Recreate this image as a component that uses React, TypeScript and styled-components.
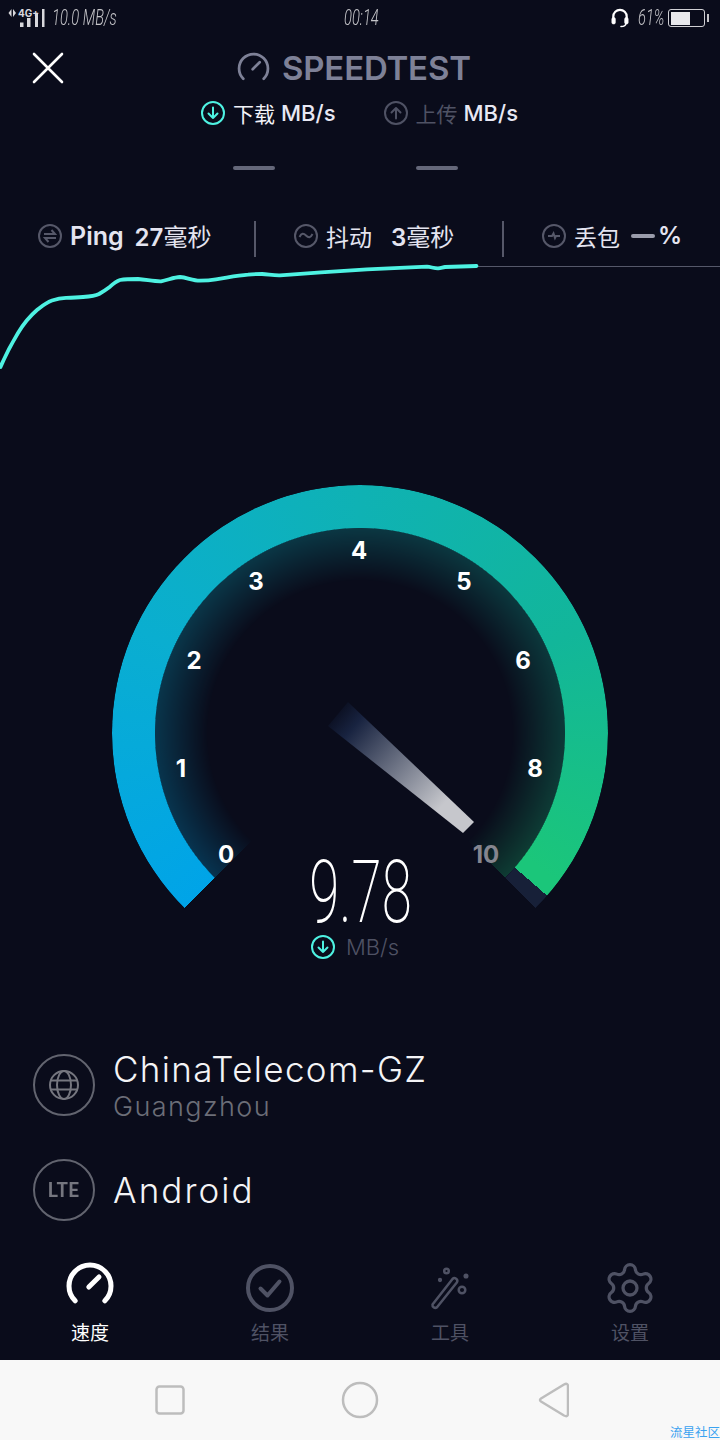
import React from 'react';
import styled, { createGlobalStyle } from 'styled-components';
import { Settings } from 'lucide-react';

const GlobalStyle = createGlobalStyle`
    html, body {
        margin: 0;
        padding: 0;
        background: #0a0c1b;
    }
    * {
        box-sizing: border-box;
    }
`;

const sans = `Inter, "Noto Sans CJK SC", sans-serif`;

const Page = styled.div`
    width: 720px;
    height: 1440px;
    display: flex;
    flex-direction: column;
    background: #0a0c1b;
    color: #fff;
    font-family: ${sans};
    overflow: hidden;
    position: relative;
`;

const StatusBar = styled.div`
    height: 36px;
    display: grid;
    grid-template-columns: 1fr auto 1fr;
    align-items: center;
`;

const StatusLeft = styled.div`
    display: flex;
    align-items: center;
    padding-left: 8px;
`;

const SignalIcon = styled.svg`
    margin-right: 6px;
    flex: none;
`;

const StatusRight = styled.div`
    display: flex;
    align-items: center;
    justify-content: flex-end;
    padding-right: 11px;
`;

const StatusText = styled.span<{ $width: number; $before?: number }>`
    display: inline-block;
    width: ${p => p.$width}px;
    margin-left: ${p => p.$before ?? 0}px;
    font-family: Roboto, sans-serif;
    font-weight: 300;
    font-style: italic;
    font-size: 22px;
    line-height: 24px;
    color: #c4c4c8;
    white-space: nowrap;
    transform: scaleX(0.67);
    transform-origin: left center;
`;

const BatteryBody = styled.div`
    width: 37px;
    height: 18px;
    border: 1.5px solid #d0d0d4;
    border-radius: 3px;
    padding: 1.5px;
    margin-left: 6px;
`;

const BatteryFill = styled.div`
    width: 61%;
    height: 100%;
    background: #e8e8ec;
`;

const BatteryNub = styled.div`
    width: 2px;
    height: 8px;
    margin-left: 2px;
    background: #c4c4c8;
`;

const TitleRow = styled.div`
    display: grid;
    grid-template-columns: 237px 1fr;
    align-items: center;
    height: 62px;
    margin-top: 1px;
`;

const CloseButton = styled.svg`
    margin-left: 32px;
`;

const Title = styled.div`
    display: flex;
    align-items: center;
    gap: 12px;
    font-size: 33px;
    font-weight: 600;
    letter-spacing: -0.2px;
    color: #7e8197;
`;

const TabsRow = styled.div`
    display: flex;
    gap: 48px;
    padding-left: 201px;
    height: 32px;
    margin-top: -2px;
`;

const Tab = styled.div`
    display: flex;
    align-items: center;
    gap: 8px;
`;

const TabLabel = styled.span<{ $dim?: boolean }>`
    font-size: 21px;
    font-weight: 400;
    color: ${p => (p.$dim ? '#4f5264' : '#f2f2f8')};
`;

const TabUnit = styled.span`
    font-size: 22px;
    font-weight: 500;
    color: #e8e8f4;
    margin-left: -2px;
`;

const DashRow = styled.div`
    display: flex;
    gap: 141px;
    padding-left: 233px;
    margin-top: 37px;
`;

const Dash = styled.div`
    width: 42px;
    height: 4px;
    border-radius: 2px;
    background: #65687a;
`;

const MetricsRow = styled.div`
    display: flex;
    align-items: center;
    height: 49px;
    margin-top: 41px;
    padding-left: 38px;
`;

const Metric = styled.div<{ $width: number }>`
    display: flex;
    align-items: center;
    width: ${p => p.$width}px;
    font-size: 23px;
    color: #e4e4f0;
`;

const MetricIcon = styled.svg`
    margin-right: 8px;
    flex: none;
`;

const MetricValue = styled.span<{ $gap: number }>`
    margin-left: ${p => p.$gap}px;
    white-space: nowrap;
    font-size: 24px;
`;

const MetricDigits = styled.span`
    font-weight: 600;
    font-size: 24px;
`;

const MetricName = styled.span<{ $bold?: boolean }>`
    font-weight: ${p => (p.$bold ? 600 : 400)};
    font-size: ${p => (p.$bold ? 25 : 23)}px;
    white-space: nowrap;
`;

const MetricDash = styled.span`
    display: inline-block;
    width: 24px;
    height: 4px;
    border-radius: 2px;
    background: #9a9cab;
    margin: 0 3px 0 11px;
`;

const Divider = styled.div<{ $after: number }>`
    width: 2px;
    height: 36px;
    background: #565869;
    margin: 7px ${p => p.$after}px 0 0;
    flex: none;
`;

const Chart = styled.svg`
    display: block;
    flex: none;
`;

const Gauge = styled.div`
    position: relative;
    width: 496px;
    height: 496px;
    margin: 115px 0 0 112px;
    flex: none;
`;

const arc = `conic-gradient(from -135deg, #00a4e8 0deg, #0aaed0 70deg, #0fb2b4 135deg, #12b69a 200deg, #1bc67a 262deg`;

const Band = styled.div`
    position: absolute;
    inset: 0;
    border-radius: 50%;
    background: ${arc}, #1bc67a 266deg, #172038 266deg, #172038 270deg, transparent 270deg);
    mask-image: radial-gradient(circle at center, transparent 204.5px, #000 205.5px);
`;

const Glow = styled.div`
    position: absolute;
    inset: 0;
    border-radius: 50%;
    opacity: 0.26;
    background: ${arc}, #1bc67a 270deg, transparent 270deg);
    mask-image: radial-gradient(circle at center, transparent 152px, #000 205px, transparent 205px);
`;

const Tick = styled.span<{ $x: number; $y: number; $dim?: boolean }>`
    position: absolute;
    left: ${p => p.$x}px;
    top: ${p => p.$y}px;
    transform: translate(-50%, -50%);
    font-size: 24px;
    font-weight: 700;
    line-height: 1;
    color: ${p => (p.$dim ? '#85858f' : '#fff')};
`;

const Needle = styled.svg`
    position: absolute;
    left: 0;
    top: 0;
`;

const Reading = styled.div`
    position: absolute;
    left: 0;
    right: 0;
    top: 370px;
    display: flex;
    flex-direction: column;
    align-items: center;
`;

const ReadingValue = styled.div`
    font-family: Roboto, sans-serif;
    font-weight: 200;
    font-size: 88px;
    line-height: 74px;
    color: #fff;
    transform: scaleX(0.62);
`;

const ReadingUnit = styled.div`
    display: flex;
    align-items: center;
    gap: 11px;
    margin: 5px 10px 0 0;
    font-size: 22px;
    line-height: 26px;
    font-weight: 300;
    color: #4f5264;
`;

const ServerList = styled.div`
    display: flex;
    flex-direction: column;
    gap: 43px;
    margin-top: 73px;
    padding-left: 33px;
`;

const ServerRow = styled.div`
    display: flex;
    align-items: center;
    gap: 18px;
    height: 62px;
`;

const RoundBadge = styled.div`
    width: 62px;
    height: 62px;
    border: 2px solid #62646f;
    border-radius: 50%;
    display: flex;
    align-items: center;
    justify-content: center;
    flex: none;
`;

const BadgeText = styled.span`
    font-family: Roboto, sans-serif;
    font-size: 21px;
    font-weight: 700;
    letter-spacing: 0.5px;
    color: #75767f;
    transform: scaleX(0.88);
`;

const ServerText = styled.div`
    display: flex;
    flex-direction: column;
`;

const ServerName = styled.div<{ $spacing: number }>`
    font-size: 35px;
    font-weight: 300;
    letter-spacing: ${p => p.$spacing}px;
    line-height: 40px;
    color: #f4f4f6;
    white-space: nowrap;
`;

const ServerPlace = styled.div`
    font-size: 27px;
    font-weight: 300;
    letter-spacing: 1.4px;
    line-height: 32px;
    margin: 2px 0 -2px;
    color: #6c6e78;
`;

const TabBar = styled.div`
    display: grid;
    grid-template-columns: repeat(4, 180px);
    height: 100px;
    margin-top: auto;
`;

const TabBarItem = styled.div<{ $active?: boolean }>`
    display: flex;
    flex-direction: column;
    align-items: center;
    font-size: 19px;
    color: ${p => (p.$active ? '#fff' : '#4f5264')};
`;

const TabBarIcon = styled.div<{ $lift?: number }>`
    height: 56px;
    display: flex;
    align-items: center;
    justify-content: center;
    padding-bottom: ${p => p.$lift ?? 0}px;
`;

const TabBarLabel = styled.span`
    line-height: 26px;
    margin-top: 5px;
`;

const SystemBar = styled.div`
    height: 80px;
    background: #f8f8f8;
    display: grid;
    grid-template-columns: repeat(3, 60px);
    justify-content: center;
    column-gap: 130px;
    align-items: center;
    justify-items: center;
    flex: none;
`;

const BackIcon = styled.svg`
    margin-left: 6px;
`;

const Watermark = styled.span`
    position: absolute;
    right: 0;
    bottom: 0;
    font-size: 12.5px;
    line-height: 14px;
    color: #3aa2f0;
`;

const ArrowCircle: React.FC<{ up?: boolean; color: string }> = ({ up, color }) => (
    <svg width="24" height="24" viewBox="0 0 24 24" fill="none" stroke={color} strokeWidth="2" strokeLinecap="round" strokeLinejoin="round">
        <circle cx="12" cy="12" r="11" />
        {up ? <path d="M12 17.500V7M7.500 11.500L12 7l4.500 4.500" /> : <path d="M12 6.500V17M7.500 12.500L12 17l4.500-4.500" />}
    </svg>
);

const GaugeGlyph: React.FC<{ size: number; color: string; weight: number }> = ({ size, color, weight }) => (
    <svg width={size} height={size} viewBox="0 0 48 48" fill="none" stroke={color} strokeWidth={weight} strokeLinecap="round">
        <path d="M9.150 38.850A21 21 0 1 1 38.850 38.850" />
        <path d="M22.800 25L33 15" />
    </svg>
);

const ticks = [
    { label: '0', x: 114, y: 370 },
    { label: '1', x: 69, y: 284 },
    { label: '2', x: 82, y: 176 },
    { label: '3', x: 144, y: 97 },
    { label: '4', x: 247, y: 66 },
    { label: '5', x: 352, y: 97 },
    { label: '6', x: 411, y: 176 },
    { label: '8', x: 423, y: 284 },
    { label: '10', x: 374, y: 370, dim: true },
];

const Speedtest: React.FC = () => {
    return (
        <Page>
            <GlobalStyle />
            <StatusBar>
                <StatusLeft>
                    <SignalIcon width="38" height="20" viewBox="0 0 38 20">
                        <path d="M0.500 5L3.500 1v8zM5 1l3 4-3 4z" fill="#d8d8dc" />
                        <text x="10" y="8.500" fontFamily="Inter" fontWeight="700" fontSize="10" fill="#d8d8dc">4G+</text>
                        <path d="M12 14.500h3.500V19H12zM19 10h3.500v9H19zM27 5h3v14h-3zM34 1h2.500v18H34z" fill="#d8d8dc" />
                    </SignalIcon>
                    <StatusText $width={70}>10.0 MB/s</StatusText>
                </StatusLeft>
                <StatusText $width={32}>00:14</StatusText>
                <StatusRight>
                    <svg width="18" height="20" viewBox="0 0 18 20" fill="none" stroke="#fff" strokeLinecap="round">
                        <path d="M2.300 11V8.500a6.700 6.700 0 0 1 13.400 0V11" strokeWidth="2.200" />
                        <rect x="0.800" y="9.500" width="3.600" height="6.500" rx="1.500" fill="#fff" strokeWidth="0.500" />
                        <rect x="13.600" y="9.500" width="3.600" height="6.500" rx="1.500" fill="#fff" strokeWidth="0.500" />
                        <path d="M15 15.500c-.3 2.500-2 3-5 3" strokeWidth="1.600" />
                    </svg>
                    <StatusText $width={24} $before={9}>61%</StatusText>
                    <BatteryBody><BatteryFill /></BatteryBody>
                    <BatteryNub />
                </StatusRight>
            </StatusBar>

            <TitleRow>
                <CloseButton width="32" height="32" viewBox="0 0 32 32" stroke="#fff" strokeWidth="2.600" strokeLinecap="round">
                    <path d="M2 2l28 28M30 2L2 30" />
                </CloseButton>
                <Title>
                    <GaugeGlyph size={33} color="#7e8197" weight={4} />
                    SPEEDTEST
                </Title>
            </TitleRow>

            <TabsRow>
                <Tab>
                    <ArrowCircle color="#4ef2e2" />
                    <TabLabel>下载</TabLabel>
                    <TabUnit>MB/s</TabUnit>
                </Tab>
                <Tab>
                    <ArrowCircle up color="#4f5264" />
                    <TabLabel $dim>上传</TabLabel>
                    <TabUnit>MB/s</TabUnit>
                </Tab>
            </TabsRow>

            <DashRow>
                <Dash />
                <Dash />
            </DashRow>

            <MetricsRow>
                <Metric $width={216}>
                    <MetricIcon width="24" height="24" viewBox="0 0 24 24" fill="none" stroke="#565869" strokeWidth="2">
                        <circle cx="12" cy="12" r="11" />
                        <path d="M6 10h11l-3.500-4M18 14H7l3.500 4" />
                    </MetricIcon>
                    <MetricName $bold>Ping</MetricName>
                    <MetricValue $gap={11}><MetricDigits>27</MetricDigits>毫秒</MetricValue>
                </Metric>
                <Divider $after={38} />
                <Metric $width={208}>
                    <MetricIcon width="24" height="24" viewBox="0 0 24 24" fill="none" stroke="#565869" strokeWidth="2">
                        <circle cx="12" cy="12" r="11" />
                        <path d="M5.500 13c2-4 4-4 6.500-1.500s4.500 2.500 6.500-1.500" />
                    </MetricIcon>
                    <MetricName>抖动</MetricName>
                    <MetricValue $gap={19}><MetricDigits>3</MetricDigits>毫秒</MetricValue>
                </Metric>
                <Divider $after={38} />
                <Metric $width={170}>
                    <MetricIcon width="24" height="24" viewBox="0 0 24 24" fill="none" stroke="#565869" strokeWidth="2">
                        <circle cx="12" cy="12" r="11" />
                        <path d="M6 12h4l1.500-2.500 1.500 4.500 1-2h4" />
                    </MetricIcon>
                    <MetricName>丢包</MetricName>
                    <MetricDash />
                    <MetricDigits>%</MetricDigits>
                </Metric>
            </MetricsRow>

            <Chart width="720" height="110" viewBox="0 260 720 110" fill="none">
                <path d="M476 266.500H720" stroke="#55586a" strokeWidth="1" />
                <path
                    d="M0.500 367C6 354 12 343 18 333C24 323 30 316 37 310C42 306 46 302.500 52 300.500C57 298.800 60 298 66 297.800C72 297.800 78 297.600 83 297C90 296.500 95 296 99 294C104 291 107 289 110 286.700C114 283 117 281 120 280C126 279 132 279 138 279C146 279.500 154 281.500 161 281.300C168 280 174 277.200 180 277C187 277.500 193 280.800 200 280.700C207 280.600 212 280 216 279.300C228 277.500 238 275.500 248 274.700C254 274 258 274 262 274C268 274.300 274 275.500 280 275.300L321 272.300L367 269.300L427 266.700C431 267 434 268.300 438 268.300C441 268 443 267.200 445 267L476.500 266"
                    stroke="#4ef2e2"
                    strokeWidth="3.800"
                    strokeLinecap="round"
                    strokeLinejoin="round"
                />
            </Chart>

            <Gauge>
                <Glow />
                <Band />
                {ticks.map(t => (
                    <Tick key={t.label} $x={t.x} $y={t.y} $dim={t.dim}>{t.label}</Tick>
                ))}
                <Needle width="496" height="496" viewBox="0 0 496 496">
                    <defs>
                        <linearGradient id="needleFade" gradientUnits="userSpaceOnUse" x1="226" y1="228" x2="357" y2="343">
                            <stop offset="0" stopColor="#0c1124" />
                            <stop offset="0.12" stopColor="#182340" />
                            <stop offset="0.8" stopColor="#c6c7cc" />
                            <stop offset="1" stopColor="#c6c7cc" />
                        </linearGradient>
                    </defs>
                    <polygon points="236,217 216,241 351,348 362,337" fill="url(#needleFade)" />
                </Needle>
                <Reading>
                    <ReadingValue>9.78</ReadingValue>
                    <ReadingUnit>
                        <ArrowCircle color="#4ef2e2" />
                        MB/s
                    </ReadingUnit>
                </Reading>
            </Gauge>

            <ServerList>
                <ServerRow>
                    <RoundBadge>
                        <svg width="32" height="32" viewBox="0 0 32 32" fill="none" stroke="#75767f" strokeWidth="2">
                            <circle cx="16" cy="16" r="14" />
                            <ellipse cx="16" cy="16" rx="7" ry="14" />
                            <path d="M3 11.500h26M3 20.500h26" />
                        </svg>
                    </RoundBadge>
                    <ServerText>
                        <ServerName $spacing={1.33}>ChinaTelecom-GZ</ServerName>
                        <ServerPlace>Guangzhou</ServerPlace>
                    </ServerText>
                </ServerRow>
                <ServerRow>
                    <RoundBadge>
                        <BadgeText>LTE</BadgeText>
                    </RoundBadge>
                    <ServerText>
                        <ServerName $spacing={2.07}>Android</ServerName>
                    </ServerText>
                </ServerRow>
            </ServerList>

            <TabBar>
                <TabBarItem $active>
                    <TabBarIcon $lift={4}><GaugeGlyph size={48} color="#fff" weight={5} /></TabBarIcon>
                    <TabBarLabel>速度</TabBarLabel>
                </TabBarItem>
                <TabBarItem>
                    <TabBarIcon>
                        <svg width="50" height="50" viewBox="0 0 50 50" fill="none" stroke="#4f5264" strokeWidth="4" strokeLinecap="round" strokeLinejoin="round">
                            <circle cx="25" cy="25" r="22" />
                            <path d="M15.500 25.500l7 7 12-14" />
                        </svg>
                    </TabBarIcon>
                    <TabBarLabel>结果</TabBarLabel>
                </TabBarItem>
                <TabBarItem>
                    <TabBarIcon>
                        <svg width="42" height="44" viewBox="0 0 42 44" fill="none" stroke="#4f5264" strokeWidth="2.500" strokeLinecap="round" strokeLinejoin="round">
                            <path d="M3.500 38.500l20-25.500a2.800 2.800 0 0 1 4.500 3.200l-20 25a2.800 2.800 0 0 1-4.500-2.700z" />
                            <circle cx="17.500" cy="5" r="2.300" />
                            <circle cx="33" cy="24" r="3.300" />
                            <circle cx="37" cy="10" r="1.300" fill="#4f5264" />
                            <circle cx="11" cy="14" r="0.900" fill="#4f5264" />
                        </svg>
                    </TabBarIcon>
                    <TabBarLabel>工具</TabBarLabel>
                </TabBarItem>
                <TabBarItem>
                    <TabBarIcon><Settings size={56} color="#4f5264" strokeWidth={1.400} /></TabBarIcon>
                    <TabBarLabel>设置</TabBarLabel>
                </TabBarItem>
            </TabBar>

            <SystemBar>
                <svg width="30" height="30" viewBox="0 0 30 30" fill="none" stroke="#bdbdbd" strokeWidth="2.500">
                    <rect x="1.500" y="1.500" width="27" height="27" rx="3" />
                </svg>
                <svg width="38" height="38" viewBox="0 0 38 38" fill="none" stroke="#bdbdbd" strokeWidth="2.500">
                    <circle cx="19" cy="19" r="17" />
                </svg>
                <BackIcon width="32" height="36" viewBox="0 0 32 36" fill="none" stroke="#bdbdbd" strokeWidth="2.500" strokeLinejoin="round">
                    <path d="M4 16.500L27 2.500Q31 0.500 31 4.500V31.500Q31 35.500 27 33.500L4 19.500Q2 18 4 16.500z" />
                </BackIcon>
            </SystemBar>
            <Watermark>流星社区</Watermark>
        </Page>
    );
};

export default Speedtest;
